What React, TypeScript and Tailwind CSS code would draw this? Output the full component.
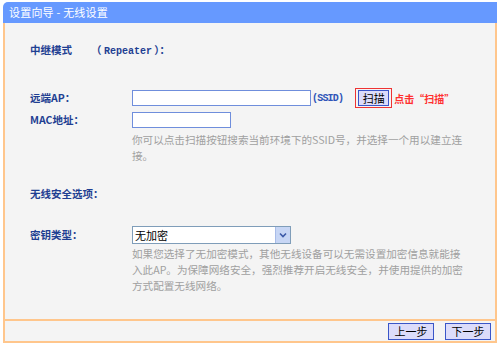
import React from "react";

const font = { fontFamily: '"Noto Sans CJK SC", "Noto Sans", sans-serif' };

function Label({ children }: { children: React.ReactNode }) {
  return (
    <div className="w-[102px] shrink-0 text-[10.5px] font-bold text-[#1f3f92] leading-[16px]">
      {children}
    </div>
  );
}

export default function App() {
  return (
    <div className="w-[500px] h-[347px] bg-white pt-[2px] px-[3px]" style={font}>
      <div className="h-[21px] bg-[#6699ff] rounded-tl-[5px] text-white text-[11px] pl-[6px] flex items-center leading-none tracking-[0.2px]">
        设置向导 - 无线设置
      </div>
      <div className="h-[296px] bg-[#f4f4f4] border-x-2 border-[#ffc68c] pl-[25px] flex flex-col">
        <div className="mt-[19px] h-[16px] flex items-center text-[10.5px] font-bold text-[#1f3f92]">
          <span className="w-[61px]">中继模式</span>
          <span>（ <span className="font-['Liberation_Mono'] text-[10px] font-bold">Repeater</span> ）：</span>
        </div>

        <div className="mt-[30px] h-[20px] flex items-center">
          <Label>远端AP：</Label>
          <div className="w-[179px] h-[16px] border border-[#6f8edc] bg-white" />
          <span className="ml-[1px] mt-[2px] text-[10px] tracking-[-0.8px] leading-none text-[#2f55b8] font-['Liberation_Mono'] font-bold">(SSID)</span>
          <div className="ml-[12px] w-[37px] h-[20px] border border-[#ee3333] flex items-center justify-center">
            <div className="w-[31px] h-[16px] bg-[#dcdcfa] border border-[#3a55c8] text-[11px] text-black flex items-center justify-center leading-none">
              扫描
            </div>
          </div>
          <span className="ml-[2px] text-[10px] font-bold text-[#ff3030]">点击“扫描”</span>
        </div>

        <div className="mt-[4px] h-[16px] flex items-center">
          <Label>MAC地址：</Label>
          <div className="w-[99px] h-[16px] border border-[#6f8edc] bg-white" />
        </div>

        <div className="mt-[4px] ml-[102px] text-[10.6px] leading-[16px] text-[#a0a0a0] w-[335px]">
          <div>你可以点击扫描按钮搜索当前环境下的SSID号，并选择一个用以建立连</div>
          <div>接。</div>
        </div>

        <div className="mt-[22px] h-[16px] flex items-center">
          <Label>无线安全选项：</Label>
        </div>

        <div className="mt-[24px] h-[18px] flex items-center">
          <Label>密钥类型：</Label>
          <div className="w-[159px] h-[18px] border border-[#7f9db9] bg-white flex items-center">
            <span className="flex-1 pl-[2px] text-[11px] text-black leading-none">无加密</span>
            <div className="w-[15px] h-[16px] bg-[#c7d6f5] border-l border-[#a8bce8] flex items-center justify-center">
              <svg width="8" height="6" viewBox="0 0 8 6">
                <path d="M1 1.5 L4 4.5 L7 1.5" fill="none" stroke="#3d5aa8" strokeWidth="1.6" />
              </svg>
            </div>
          </div>
        </div>

        <div className="mt-[2px] ml-[102px] text-[10.6px] leading-[16px] text-[#a0a0a0] w-[340px]">
          <div>如果您选择了无加密模式，其他无线设备可以无需设置加密信息就能接</div>
          <div>入此AP。为保障网络安全，强烈推荐开启无线安全，并使用提供的加密</div>
          <div>方式配置无线网络。</div>
        </div>
      </div>
      <div className="h-[24px] bg-[#f4f4f4] border-2 border-[#ffc68c] flex justify-end items-center gap-[11px] pr-[4px]">
        <div className="w-[46px] h-[17px] bg-[#dcdcfa] border border-[#3a55c8] text-[11px] text-black flex items-center justify-center leading-none">
          上一步
        </div>
        <div className="w-[46px] h-[17px] bg-[#dcdcfa] border border-[#3a55c8] text-[11px] text-black flex items-center justify-center leading-none">
          下一步
        </div>
      </div>
    </div>
  );
}
